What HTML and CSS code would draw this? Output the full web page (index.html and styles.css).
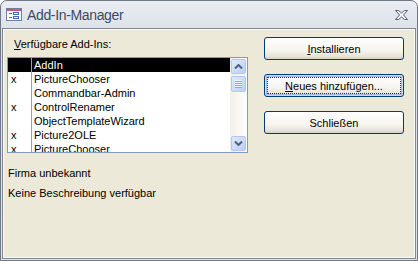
FILE: index.html
```html
<!DOCTYPE html>
<html lang="de">
<head>
    <meta charset="UTF-8">
    <title>Add-In-Manager</title>
    <link rel="stylesheet" href="styles.css">
</head>
<body>
    <div class="window">
        <div class="titlebar">
            <svg class="app-icon" viewBox="0 0 16 13">
                <rect x="0.5" y="0.5" width="15" height="12" fill="#fff" stroke="#6f7fa8"/>
                <rect x="1" y="1" width="14" height="2" fill="#d9507a"/>
                <line x1="3" y1="5.5" x2="6" y2="5.5" stroke="#4769b4"/>
                <rect x="7.5" y="4.5" width="5" height="2" fill="none" stroke="#4769b4"/>
                <line x1="3" y1="9.5" x2="6" y2="9.5" stroke="#4769b4"/>
                <rect x="7.5" y="8.5" width="5" height="2" fill="none" stroke="#4769b4"/>
            </svg>
            <span class="title">Add-In-Manager</span>
            <svg class="close" viewBox="0 0 13 10">
                <polygon points="0.5,0.5 3.5,0.5 6.5,3 9.5,0.5 12.5,0.5 8.5,5 12.5,9.5 9.5,9.5 6.5,7 3.5,9.5 0.5,9.5 4.5,5" fill="#f2f4f7" stroke="#545e6c"/>
            </svg>
        </div>
        <div class="client">
            <div class="panel">
                <div class="left">
                    <label class="caption"><u>V</u>erfügbare Add-Ins:</label>
                    <div class="listbox">
                        <div class="rows">
                            <div class="row selected"><span class="flag"></span><span class="name">AddIn</span></div>
                            <div class="row"><span class="flag">x</span><span class="name">PictureChooser</span></div>
                            <div class="row"><span class="flag"></span><span class="name">Commandbar-Admin</span></div>
                            <div class="row"><span class="flag">x</span><span class="name">ControlRenamer</span></div>
                            <div class="row"><span class="flag"></span><span class="name">ObjectTemplateWizard</span></div>
                            <div class="row"><span class="flag">x</span><span class="name">Picture2OLE</span></div>
                            <div class="row"><span class="flag">x</span><span class="name">PictureChooser</span></div>
                        </div>
                        <div class="scrollbar">
                            <div class="sb-btn">
                                <svg viewBox="0 0 9 5"><polyline points="1,4.5 4.5,1 8,4.5" fill="none" stroke="#4d6185" stroke-width="2"/></svg>
                            </div>
                            <div class="sb-thumb"><div class="grip"></div></div>
                            <div class="sb-track"></div>
                            <div class="sb-btn">
                                <svg viewBox="0 0 9 5"><polyline points="1,0.5 4.5,4 8,0.5" fill="none" stroke="#4d6185" stroke-width="2"/></svg>
                            </div>
                        </div>
                    </div>
                </div>
                <div class="buttons">
                    <button class="btn"><u>I</u>nstallieren</button>
                    <button class="btn default"><u>N</u>eues hinzufügen...</button>
                    <button class="btn">Schließen</button>
                </div>
            </div>
            <div class="details">
                <p>Firma unbekannt</p>
                <p>Keine Beschreibung verfügbar</p>
            </div>
        </div>
    </div>
</body>
</html>
```

FILE: styles.css
```css
* {
    margin: 0;
    padding: 0;
    box-sizing: border-box;
}
body {
    width: 418px;
    height: 261px;
    overflow: hidden;
    background: #fff;
    color: #000;
    font-family: "Liberation Sans", Arial, sans-serif;
    font-size: 11px;
}
.window {
    width: 418px;
    height: 261px;
    display: flex;
    flex-direction: column;
    border: 1px solid #6e7886;
    border-radius: 7px 7px 0 0;
    background: linear-gradient(#eaedf2, #dde2e9 28px, #dfe4ea);
    padding: 0 1px 1px;
}
.titlebar {
    height: 27px;
    display: flex;
    align-items: center;
    padding: 0 8px 0 4px;
}
.app-icon {
    width: 16px;
    height: 13px;
    margin-right: 5px;
}
.title {
    flex: 1;
    font-size: 14px;
    letter-spacing: -0.35px;
    color: #394a68;
}
.close {
    width: 13px;
    height: 10px;
}
.client {
    flex: 1;
    border: 1px solid #7c8590;
    box-shadow: inset 0 0 0 1px #fbfbf8;
    background: #ece9d8;
}
.panel {
    display: flex;
    padding: 8px 0 0 4px;
}
.left {
    width: 241px;
}
.caption {
    display: block;
    height: 13px;
    line-height: 13px;
    margin: 1px 0 6px;
    padding-left: 7px;
}
.listbox {
    height: 96px;
    display: flex;
    border: 1px solid #7f9db9;
    background: #fff;
}
.rows {
    flex: 1;
    overflow: hidden;
}
.row {
    display: flex;
    height: 14px;
    line-height: 14px;
    white-space: nowrap;
}
.row.selected {
    background: #000;
    color: #fff;
}
.flag {
    width: 24px;
    padding-left: 3px;
    border-right: 1px solid #a0a0a0;
}
.name {
    padding-left: 2px;
}
.scrollbar {
    width: 17px;
    display: flex;
    flex-direction: column;
    background: linear-gradient(to right, #f2f0e8, #fdfdfb);
}
.sb-btn, .sb-thumb {
    margin: 1px;
    height: 15px;
    display: flex;
    align-items: center;
    justify-content: center;
    border: 1px solid #b2c6f3;
    border-radius: 2px;
    background: linear-gradient(135deg, #e0e9fe, #bccffa);
}
.sb-btn svg {
    width: 9px;
    height: 5px;
}
.sb-thumb {
    height: 16px;
}
.grip {
    width: 7px;
    height: 8px;
    background: repeating-linear-gradient(#eef3fe 0 1px, #8ca5e4 1px 2px);
}
.sb-track {
    flex: 1;
}
.buttons {
    width: 140px;
    margin-left: 16px;
    display: flex;
    flex-direction: column;
    gap: 14px;
}
.btn {
    height: 23px;
    border: 1px solid #003c74;
    border-radius: 3px;
    background: linear-gradient(#ffffff, #f5f4ef 60%, #e6e3d8 88%, #d6d0c5);
    font-family: "Liberation Sans", Arial, sans-serif;
    font-size: 11px;
    color: #000;
}
.btn.default {
    box-shadow: inset 0 0 0 1px #cddaf8, inset 0 0 0 2px #9fb6ea;
    outline: 1px dotted #333;
    outline-offset: -4px;
}
.details {
    display: flex;
    flex-direction: column;
    gap: 7px;
    padding: 14px 0 0 5px;
    line-height: 13px;
}
```
